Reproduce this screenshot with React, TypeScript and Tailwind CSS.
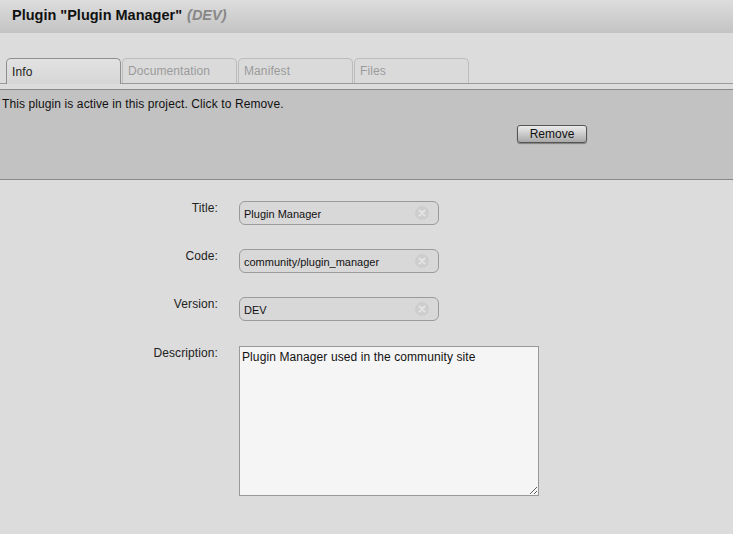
import React from "react";

const tabs = ["Info", "Documentation", "Manifest", "Files"];

function ClearIcon() {
  return (
    <svg width="14" height="14" viewBox="0 0 14 14" className="shrink-0">
      <circle cx="7" cy="7" r="7" fill="#cdcdcd" />
      <path d="M4.5 4.5 L9.5 9.5 M9.5 4.5 L4.5 9.5" stroke="#e4e4e4" strokeWidth="2" strokeLinecap="round" />
    </svg>
  );
}

function Field({ label, value }: { label: string; value: string }) {
  return (
    <div className="flex items-start h-[48px]">
      <div className="w-[218px] text-right text-[12px] tracking-[0.1px] text-[#222] mt-[-3px]">{label}</div>
      <div className="ml-[21px] w-[200px] h-[24px] rounded-[6px] border border-[#9a9a9a] bg-[#d8d8d8] flex items-center pl-[4px] pr-[9px] mt-[-1px]">
        <span className="flex-1 text-[11px] text-[#111] pt-[2px]">{value}</span>
        <ClearIcon />
      </div>
    </div>
  );
}

export default function App() {
  return (
    <div className="w-[733px] h-[534px] bg-[#dcdcdc] font-['Liberation_Sans',Arial,sans-serif] overflow-hidden">
      {/* header */}
      <div className="h-[33px] bg-gradient-to-b from-[#dddddd] to-[#c3c3c3] flex items-center pl-[12px] pb-[2px]">
        <span className="text-[14.5px] font-bold text-[#111]">Plugin "Plugin Manager"</span>
        <span className="ml-[5px] text-[14.5px] italic font-bold text-[#888]">(DEV)</span>
      </div>

      {/* tabs */}
      <div className="mt-[25px] flex items-end h-[26px] border-b border-[#9a9a9a] pl-[6px]">
        {tabs.map((t, i) => (
          <div
            key={t}
            className={
              i === 0
                ? "w-[115px] h-[26px] mr-[1px] rounded-t-[5px] border border-b-0 border-[#8f8f8f] bg-gradient-to-b from-[#e2e2e2] to-[#d6d6d6] text-[12px] tracking-[0.1px] text-[#222] pl-[5px] pt-[4px] mb-[-1px]"
                : "w-[115px] h-[25px] mr-[1px] rounded-t-[5px] border border-b-0 border-[#bcbcbc] bg-[#dadada] text-[12px] tracking-[0.1px] text-[#9a9a9a] pl-[5px] pt-[3px]"
            }
          >
            {t}
          </div>
        ))}
      </div>

      {/* status panel */}
      <div className="mt-[5px] h-[91px] bg-[#c2c2c2] border-y border-[#8a8a8a] px-[2px] pt-[5px]">
        <div className="text-[12px] tracking-[0.1px] text-[#111]">This plugin is active in this project. Click to Remove.</div>
        <div className="flex justify-end pr-[144px] mt-[12px]">
          <button className="w-[70px] h-[18px] rounded-[3px] border border-[#555] bg-gradient-to-b from-[#ececec] to-[#a9a9a9] text-[12px] text-[#111] leading-none shadow-[0_1px_1px_rgba(0,0,0,0.35)]">
            Remove
          </button>
        </div>
      </div>

      {/* form */}
      <div className="pt-[22px]">
        <Field label="Title:" value="Plugin Manager" />
        <Field label="Code:" value="community/plugin_manager" />
        <Field label="Version:" value="DEV" />
        <div className="flex items-start">
          <div className="w-[218px] text-right text-[12px] tracking-[0.1px] text-[#222] mt-[-2px]">Description:</div>
          <textarea
            defaultValue="Plugin Manager used in the community site"
            className="ml-[21px] w-[300px] h-[150px] border border-[#999] bg-[#f5f5f5] text-[12px] tracking-[0.1px] text-[#111] px-[2px] py-[1px] outline-none"
          />
        </div>
      </div>
    </div>
  );
}
